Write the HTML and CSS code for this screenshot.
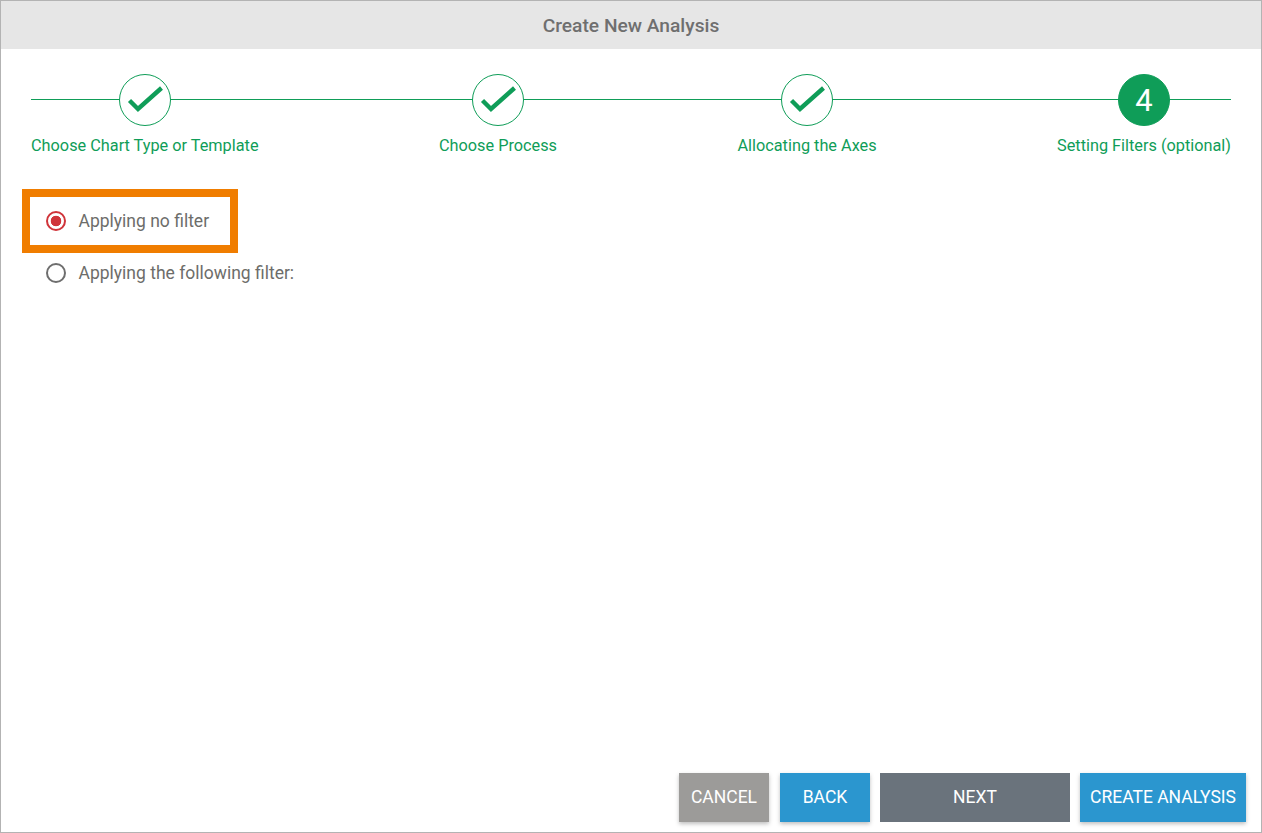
FILE: index.html
```html
<!DOCTYPE html>
<html lang="en">
<head>
<meta charset="utf-8">
<title>Create New Analysis</title>
<link rel="stylesheet" href="styles.css">
</head>
<body>
<div class="dialog">
  <header class="title">Create New Analysis</header>
  <div class="stepper">
    <div class="step">
      <span class="circle"><svg class="check" viewBox="0 0 36 28" width="36" height="28"><path d="M2.5 14.5 L11 23 L34.5 2" fill="none" stroke="#0f9d58" stroke-width="4.4"/></svg></span>
      <span class="label">Choose Chart Type or Template</span>
    </div>
    <div class="step">
      <span class="circle"><svg class="check" viewBox="0 0 36 28" width="36" height="28"><path d="M2.5 14.5 L11 23 L34.5 2" fill="none" stroke="#0f9d58" stroke-width="4.4"/></svg></span>
      <span class="label">Choose Process</span>
    </div>
    <div class="step">
      <span class="circle"><svg class="check" viewBox="0 0 36 28" width="36" height="28"><path d="M2.5 14.5 L11 23 L34.5 2" fill="none" stroke="#0f9d58" stroke-width="4.4"/></svg></span>
      <span class="label">Allocating the Axes</span>
    </div>
    <div class="step">
      <span class="circle active">4</span>
      <span class="label">Setting Filters (optional)</span>
    </div>
  </div>
  <div class="options">
    <label class="option highlighted"><span class="radio checked"></span>Applying no filter</label>
    <label class="option"><span class="radio"></span>Applying the following filter:</label>
  </div>
  <footer class="actions">
    <button class="btn cancel">CANCEL</button>
    <button class="btn primary back">BACK</button>
    <button class="btn next">NEXT</button>
    <button class="btn primary create">CREATE ANALYSIS</button>
  </footer>
</div>
</body>
</html>
```
FILE: styles.css
```css
* { box-sizing: border-box; }
html, body { margin: 0; height: 100%; }
body { font-family: Roboto, "Liberation Sans", sans-serif; background: #fff; }
.dialog {
  width: 1262px;
  height: 833px;
  border: 1px solid #b3b3b3;
  display: flex;
  flex-direction: column;
  background: #fff;
}
.title {
  height: 48px;
  flex: none;
  background: #e6e6e6;
  color: #6f6f6f;
  font-size: 19.2px;
  font-weight: 500;
  display: flex;
  align-items: center;
  justify-content: center;
}
.stepper {
  position: relative;
  margin: 25px 30px 0;
  display: flex;
  justify-content: space-between;
}
.stepper::before {
  content: "";
  position: absolute;
  left: 0;
  right: 0;
  top: 25px;
  height: 1px;
  background: #0f9d58;
}
.step {
  position: relative;
  display: flex;
  flex-direction: column;
  align-items: center;
}
.circle {
  width: 52px;
  height: 52px;
  border-radius: 50%;
  border: 1px solid #0f9d58;
  background: #fff;
  display: flex;
  align-items: center;
  justify-content: center;
}
.circle.active {
  background: #0f9d58;
  color: #fff;
  font-size: 31px;
}
.check { display: block; flex: none; }
.label {
  margin-top: 10px;
  color: #0f9d58;
  font-size: 16.3px;
  line-height: 19px;
  white-space: nowrap;
}
.options {
  margin: 34px 0 0 21px;
  display: flex;
  flex-direction: column;
  align-items: flex-start;
}
.option {
  display: flex;
  align-items: center;
  height: 64px;
  padding-left: 24px;
  padding-right: 21px;
  color: #6d6d6a;
  font-size: 17.5px;
  white-space: nowrap;
  border: 8px solid transparent;
}
.option.highlighted { border-color: #f07d00; width: 216px; }
.option + .option { height: 40px; }
.radio {
  flex: none;
  width: 20px;
  height: 20px;
  margin-left: -8px;
  margin-right: 12.5px;
  border-radius: 50%;
  border: 2px solid #6e6e6e;
  background: #fff;
}
.radio.checked {
  border-color: #d0343a;
  background: radial-gradient(circle, #d0343a 0 5px, #fff 5.6px);
}
.actions {
  margin-top: auto;
  margin-bottom: 10px;
  padding-right: 15px;
  display: flex;
  justify-content: flex-end;
  gap: 10px;
}
.btn {
  height: 49px;
  border: 0;
  padding: 0 0 2px;
  color: #fff;
  font-family: inherit;
  font-size: 17.5px;
  box-shadow: 0 2px 4px rgba(0, 0, 0, 0.25);
}
.cancel { width: 90px; background: #9c9b99; margin-right: 1px; }
.back { width: 90px; }
.primary { background: #2b96cf; }
.next { width: 190px; background: #6a737c; box-shadow: none; }
.create { width: 166px; }
```
